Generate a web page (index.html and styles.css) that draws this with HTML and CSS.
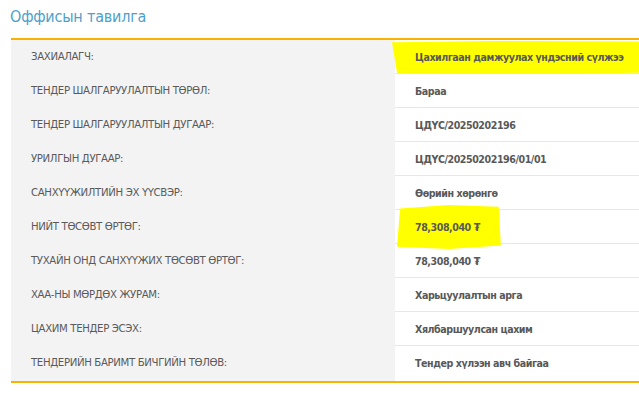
FILE: index.html
```html
<!DOCTYPE html>
<html lang="mn">
<head>
<meta charset="utf-8">
<link rel="stylesheet" href="styles.css">
</head>
<body>
<div class="page">
  <h2 class="title">Оффисын тавилга</h2>
  <div class="table">
    <div class="row"><div class="label">ЗАХИАЛАГЧ:</div><div class="value"><span class="mark mark-wide">Цахилгаан дамжуулах үндэсний сүлжээ</span></div></div>
    <div class="row"><div class="label">ТЕНДЕР ШАЛГАРУУЛАЛТЫН ТӨРӨЛ:</div><div class="value">Бараа</div></div>
    <div class="row"><div class="label">ТЕНДЕР ШАЛГАРУУЛАЛТЫН ДУГААР:</div><div class="value">ЦДҮС/20250202196</div></div>
    <div class="row"><div class="label">УРИЛГЫН ДУГААР:</div><div class="value">ЦДҮС/20250202196/01/01</div></div>
    <div class="row"><div class="label">САНХҮҮЖИЛТИЙН ЭХ ҮҮСВЭР:</div><div class="value">Өөрийн хөрөнгө</div></div>
    <div class="row"><div class="label">НИЙТ ТӨСӨВТ ӨРТӨГ:</div><div class="value"><span class="mark mark-price">78,308,040 ₮</span></div></div>
    <div class="row"><div class="label">ТУХАЙН ОНД САНХҮҮЖИХ ТӨСӨВТ ӨРТӨГ:</div><div class="value">78,308,040 ₮</div></div>
    <div class="row"><div class="label">ХАА-НЫ МӨРДӨХ ЖУРАМ:</div><div class="value">Харьцуулалтын арга</div></div>
    <div class="row"><div class="label">ЦАХИМ ТЕНДЕР ЭСЭХ:</div><div class="value">Хялбаршуулсан цахим</div></div>
    <div class="row"><div class="label">ТЕНДЕРИЙН БАРИМТ БИЧГИЙН ТӨЛӨВ:</div><div class="value">Тендер хүлээн авч байгаа</div></div>
  </div>
</div>
</body>
</html>
```
FILE: styles.css
```css
html, body { margin: 0; padding: 0; background: #fff; }
body { font-family: "DejaVu Sans Condensed", "Liberation Sans", sans-serif; color: #555; }
.page { padding: 6px 0 0 11px; }
.title {
  margin: 0 0 0 -1px;
  font-weight: normal;
  font-size: 16px;
  color: #4e9fcb;
  height: 32px;
  line-height: 22px;
  letter-spacing: -0.2px;
}
.table {
  border-top: 2px solid #f9b200;
  border-bottom: 2px solid #f9b200;
}
.row {
  display: grid;
  grid-template-columns: 384px 1fr;
  height: 34px;
  border-bottom: 1px solid #e7e7e7;
  box-sizing: border-box;
}
.row:last-child { border-bottom: none; height: 35px; }
.label {
  background: #f3f3f3;
  padding-left: 20px;
  font-size: 11.3px;
  line-height: 34px;
  color: #5a5a5a;
  letter-spacing: -0.35px;
  white-space: nowrap;
}
.value {
  padding-left: 20px;
  font-size: 10.6px;
  font-weight: bold;
  line-height: 34px;
  color: #585858;
  letter-spacing: -0.45px;
  white-space: nowrap;
}
.mark { position: relative; z-index: 0; }
.mark::before {
  content: "";
  position: absolute;
  z-index: -1;
  background: #ffff00;
}
.mark-wide::before {
  left: -23px; right: -25px; top: -10px; bottom: -11px;
  clip-path: polygon(0 4%, 40% 0, 100% 2%, 99% 96%, 60% 100%, 2% 98%);
}
.mark-price::before {
  left: -18px; right: -21px; top: -16px; bottom: -16px;
  clip-path: polygon(3% 8%, 50% 0, 98% 4%, 100% 92%, 50% 100%, 0 95%);
}
```
